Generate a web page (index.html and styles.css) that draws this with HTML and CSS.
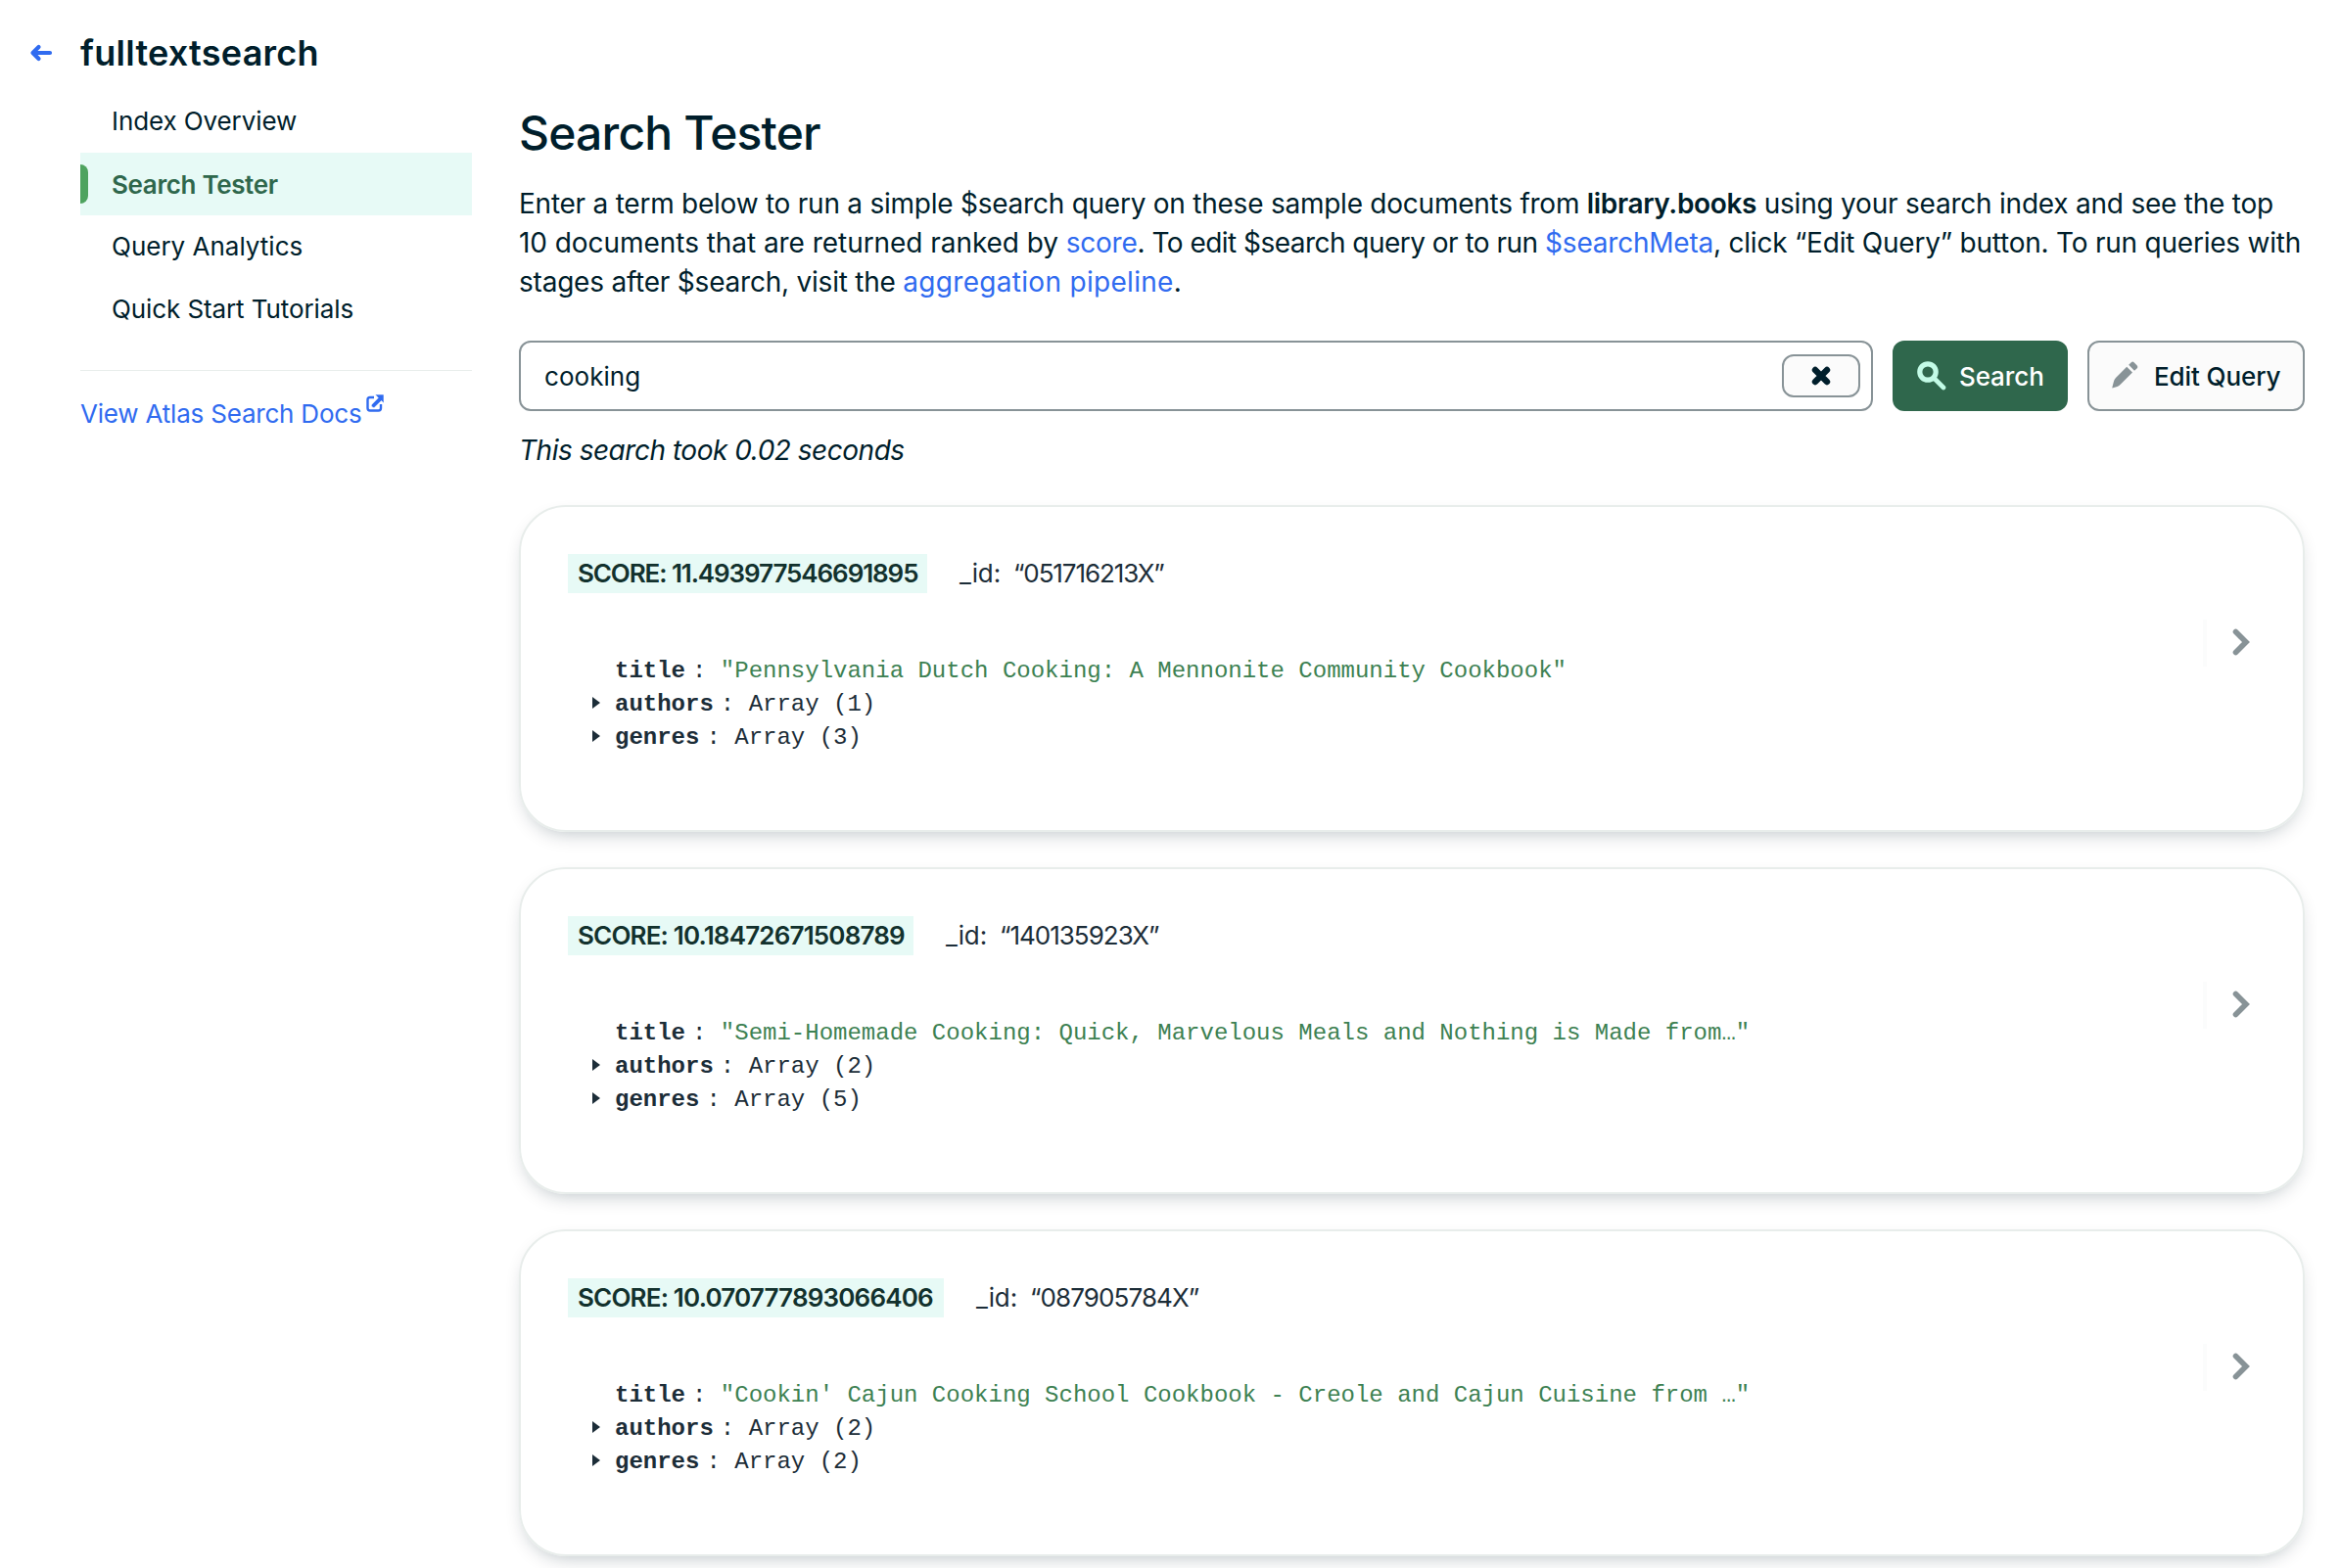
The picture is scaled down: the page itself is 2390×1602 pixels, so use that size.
FILE: index.html
```
<!DOCTYPE html>
<html lang="en">
<head>
<meta charset="utf-8">
<title>Search Tester</title>
<link rel="stylesheet" href="styles.css">
</head>
<body>
<div class="page">
  <aside class="sidebar">
    <header class="index-head">
      <svg class="back" viewBox="0 0 24 18"><path d="M9.5 3 3.5 9l6 6M4.5 9H21" fill="none" stroke="#306bf0" stroke-width="4.2" stroke-linecap="round" stroke-linejoin="round"/></svg>
      <h2 class="index-name">fulltextsearch</h2>
    </header>
    <nav class="nav">
      <a class="nav-item">Index Overview</a>
      <a class="nav-item active">Search Tester</a>
      <a class="nav-item nav-query">Query Analytics</a>
      <a class="nav-item">Quick Start Tutorials</a>
    </nav>
    <div class="docs">
      <a class="link docs-link">View Atlas Search Docs</a>
      <svg class="external" viewBox="0 0 18 18"><path d="M8 3H4Q1.5 3 1.5 5.500V14Q1.500 16.500 4 16.500H12.500Q15 16.500 15 14V10" fill="none" stroke="#306bf0" stroke-width="2.400"/><path d="M9 0H18V9L15.500 6.500 8.500 13.200Q7.300 14 6 12.800T5.700 10.200L12.300 3.500Z" fill="#306bf0" stroke="#fff" stroke-width=".6"/></svg>
    </div>
  </aside>

  <main class="main">
    <h1 class="title">Search Tester</h1>
    <p class="intro"><span class="l1">Enter a term below to run a simple $search query on these sample documents from </span><b>library.books</b> using your search index and see the top<br>
      <span class="l2">10 documents that are returned ranked by</span> <a class="link">score</a><span class="l3">. To edit $search query or to run</span> <a class="link">$searchMeta</a>, click “Edit Query” button. To run queries with<br>
      stages after $search, visit the <a class="link agg">aggregation pipeline</a>.</p>

    <div class="search-row">
      <div class="field">
        <span class="term">cooking</span>
        <button class="clear"><svg viewBox="0 0 20 20"><path d="M4 4 16 16M16 4 4 16" stroke="#001e2b" stroke-width="6.400" stroke-linecap="round"/></svg></button>
      </div>
      <button class="btn primary">
        <svg class="ico-search" viewBox="0 0 30 30"><circle cx="11" cy="11" r="8.200" fill="none" stroke="#c3fbe6" stroke-width="5.200"/><path d="M17.500 17.500 27 27" stroke="#c3fbe6" stroke-width="4.600" stroke-linecap="round"/></svg>
        <span>Search</span>
      </button>
      <button class="btn default">
        <svg class="ico-edit" viewBox="0 0 28 28"><path d="M15.200 5.800 21 11.600 9 23.600Q7.500 25.300 5.500 25.900L.3 27.500Q.2 27.200 1.800 21.200 2.200 18.800 4 17ZM17.200 3.800 19.800 1.200Q21.200 0 22.600 1.200L25.800 4.400Q27 5.800 25.800 7.200L23 9.800Z" fill="#889397"/></svg>
        <span>Edit Query</span>
      </button>
    </div>
    <p class="took">This search took 0.02 seconds</p>

    <div class="results">
      <article class="card">
        <div class="doc">
          <div class="meta"><span class="score s1">SCORE: 11.493977546691895</span><span class="key">_id:</span><span class="val v1">“051716213X”</span></div>
          <div class="fields">
            <div class="row"><i></i><b>title</b><span>: </span><span class="str">"Pennsylvania Dutch Cooking: A Mennonite Community Cookbook"</span></div>
            <div class="row"><i class="caret"></i><b>authors</b><span>: Array (1)</span></div>
            <div class="row"><i class="caret"></i><b>genres</b><span>: Array (3)</span></div>
          </div>
        </div>
        <div class="more"><svg viewBox="0 0 18 28"><path d="M3.500 3.500 14 14 3.500 24.500" fill="none" stroke="#889397" stroke-width="5.600" stroke-linecap="round"/></svg></div>
      </article>
      <article class="card">
        <div class="doc">
          <div class="meta"><span class="score s2">SCORE: 10.18472671508789</span><span class="key">_id:</span><span class="val v2">“140135923X”</span></div>
          <div class="fields">
            <div class="row"><i></i><b>title</b><span>: </span><span class="str">"Semi-Homemade Cooking: Quick, Marvelous Meals and Nothing is Made from…"</span></div>
            <div class="row"><i class="caret"></i><b>authors</b><span>: Array (2)</span></div>
            <div class="row"><i class="caret"></i><b>genres</b><span>: Array (5)</span></div>
          </div>
        </div>
        <div class="more"><svg viewBox="0 0 18 28"><path d="M3.500 3.500 14 14 3.500 24.500" fill="none" stroke="#889397" stroke-width="5.600" stroke-linecap="round"/></svg></div>
      </article>
      <article class="card">
        <div class="doc">
          <div class="meta"><span class="score s3">SCORE: 10.070777893066406</span><span class="key">_id:</span><span class="val v3">“087905784X”</span></div>
          <div class="fields">
            <div class="row"><i></i><b>title</b><span>: </span><span class="str">"Cookin' Cajun Cooking School Cookbook - Creole and Cajun Cuisine from …"</span></div>
            <div class="row"><i class="caret"></i><b>authors</b><span>: Array (2)</span></div>
            <div class="row"><i class="caret"></i><b>genres</b><span>: Array (2)</span></div>
          </div>
        </div>
        <div class="more"><svg viewBox="0 0 18 28"><path d="M3.500 3.500 14 14 3.500 24.500" fill="none" stroke="#889397" stroke-width="5.600" stroke-linecap="round"/></svg></div>
      </article>
    </div>
  </main>
</div>
</body>
</html>
```
FILE: styles.css
```
* { box-sizing: border-box; }
body {
  margin: 0;
  height: 1602px;
  overflow: hidden;
  background: #fff;
  color: #001e2b;
  font-family: Inter, "Liberation Sans", sans-serif;
  font-size: 26px;
  letter-spacing: -0.1px;
}
h1, h2, p { margin: 0; }
svg { display: block; flex: none; }
.link { color: #306bf0; }

.page { display: flex; gap: 48px; width: 2354px; }

/* Sidebar */
.sidebar { width: 482px; padding: 30px 0 0 30px; flex: none; }
.index-head { display: flex; align-items: center; height: 48px; gap: 28px; }
.back { width: 24px; height: 18px; }
.index-name { font-size: 36px; font-weight: 600; line-height: 48px; letter-spacing: 0.25px; }
.nav {
  margin: 14px 0 0 52px;
  padding-bottom: 30px;
  border-bottom: 1px solid #e8edeb;
}
.nav-item { display: flex; align-items: center; height: 64px; padding: 0 0 2px 32px; }
.nav-query { letter-spacing: 0; }
.nav-item.active {
  padding: 0;
  gap: 24px;
  background: #e7faf6;
  color: #2f674c;
  font-weight: 600;
  letter-spacing: -0.35px;
}
.nav-item.active::before {
  content: "";
  width: 8px;
  height: 40px;
  border-radius: 0 8px 8px 0;
  background: #4ea35f;
}
.docs { display: flex; margin: 23px 0 0 52px; gap: 4px; }
.docs-link { line-height: 41px; letter-spacing: -0.2px; }
.external { width: 18px; height: 18px; margin-top: 1px; }

/* Main column */
.main { flex: 1; min-width: 0; padding-top: 104px; }
.title { font-size: 48px; font-weight: 500; line-height: 64px; letter-spacing: -0.8px; }
.intro { margin-top: 20px; font-size: 28px; line-height: 40px; letter-spacing: -0.22px; white-space: nowrap; }
.intro b { font-weight: 600; letter-spacing: -0.35px; }
.intro .l1 { letter-spacing: -0.24px; }
.intro .l2 { letter-spacing: -0.05px; }
.intro .l3 { letter-spacing: -0.53px; }
.intro .agg { letter-spacing: 0.3px; }

.search-row { display: flex; gap: 20px; margin-top: 40px; height: 72px; }
.field {
  flex: 1;
  display: flex;
  align-items: center;
  justify-content: space-between;
  padding: 0 11px 0 24px;
  border: 2px solid #889397;
  border-radius: 12px;
}
.term { letter-spacing: 0.05px; }
button { font: inherit; color: inherit; letter-spacing: inherit; padding: 0; }
.clear {
  display: grid;
  place-items: center;
  width: 80px;
  height: 44px;
  border: 2px solid #889397;
  border-radius: 12px;
  background: #fbfbfb;
}
.clear svg { width: 20px; height: 20px; }
.btn { display: flex; align-items: center; border-radius: 12px; font-weight: 500; }
.primary { width: 179px; padding-left: 25px; gap: 13px; border: 0; background: #2f674c; color: #fff; }
.default { width: 222px; padding-left: 23px; gap: 15px; border: 2px solid #889397; background: #fbfbfb; }
.ico-search { width: 30px; height: 30px; }
.ico-edit { width: 28px; height: 28px; margin-top: -2px; }

.took { margin-top: 20px; font-size: 28px; font-style: italic; line-height: 40px; letter-spacing: -0.48px; }

/* Result cards */
.results { display: flex; flex-direction: column; gap: 36px; margin-top: 36px; }
.card {
  display: flex;
  justify-content: space-between;
  height: 334px;
  padding: 48px 54px 0 48px;
  border: 2px solid #e8edeb;
  border-radius: 48px;
  box-shadow: 0 8px 20px -8px rgba(0, 30, 43, 0.3);
}
.meta { display: flex; height: 40px; line-height: 40px; color: #1c2d38; }
.score {
  padding-left: 10px;
  background: #e7faf6;
  color: #12312d;
  font-weight: 600;
}
.s1 { width: 367px; letter-spacing: -1.1px; }
.s2 { width: 353px; letter-spacing: -0.83px; }
.s3 { width: 384px; letter-spacing: -0.82px; }
.key { margin-left: 33px; width: 55px; }
.v1 { letter-spacing: -1.1px; }
.v2 { letter-spacing: -1px; }
.v3 { letter-spacing: -0.9px; }
.fields {
  margin-top: 63px;
  padding-left: 25px;
  font: 24px/34px "Liberation Mono", monospace;
  letter-spacing: 0;
  color: #1c2d38;
}
.row { display: flex; white-space: pre; }
.row b { margin-right: 7px; }
.row i { width: 23px; flex: none; }
.caret::before {
  content: "";
  display: block;
  margin-top: 9px;
  width: 8px;
  height: 12px;
  background: #1c2d38;
  clip-path: polygon(0 0, 100% 50%, 0 100%);
}
.str { color: #3d8152; }
.more {
  display: flex;
  align-items: center;
  width: 48px;
  height: 48px;
  margin-top: 67px;
  padding-left: 26px;
  border-left: 4px solid #fbfcfc;
}
.more svg { width: 18px; height: 28px; margin-top: -2px; }
```
